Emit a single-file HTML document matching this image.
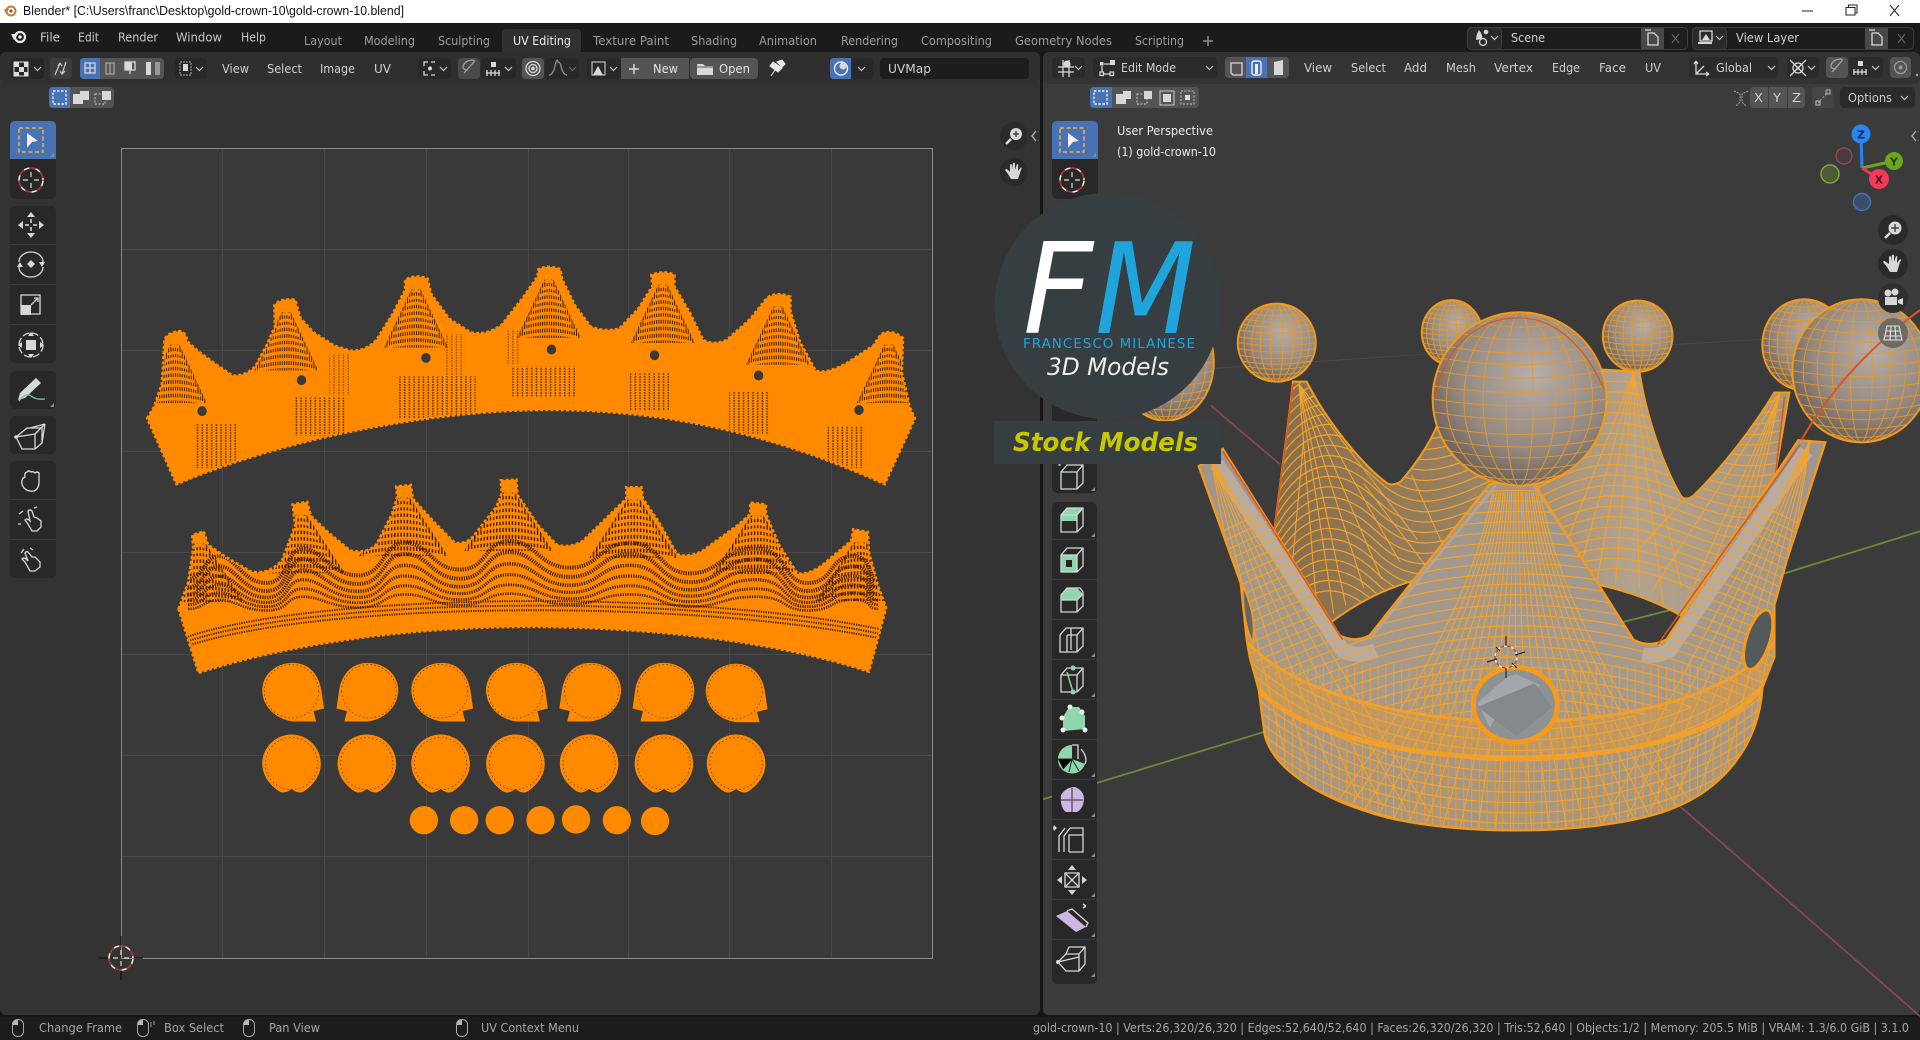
<!DOCTYPE html>
<html lang="en">
<head>
<meta charset="utf-8">
<title>Blender</title>
<style>
html,body{margin:0;padding:0;background:#333;width:1920px;height:1040px;overflow:hidden}
svg{display:block}
path,ellipse,line,circle,rect,polygon,polyline{vector-effect:non-scaling-stroke}
text{font-family:"DejaVu Sans","Liberation Sans",sans-serif;font-size:12.5px;fill:#c4c4c4}
.t{font-family:"Liberation Sans",sans-serif;font-size:12.5px;fill:#111}
.m{fill:#c8c8c8}
.tab{fill:#9c9c9c}
.hd{fill:#cfcfcf}
.st{fill:#a6a6a6;font-size:12px}
.ov{fill:#ececec}
.i{fill:none;stroke:#d8d8d8;stroke-width:1.3}
.f{fill:#d8d8d8;stroke:none}
.chev{fill:none;stroke:#c8c8c8;stroke-width:1.2}
.cell{fill:#282828}
.div{stroke:#3a3a3a;stroke-width:1}
</style>
</head>
<body>
<svg xmlns="http://www.w3.org/2000/svg" width="1920" height="1040" viewBox="0 0 1920 1040">
<defs>
<radialGradient id="bg" cx=".58" cy=".36" r=".72">
 <stop offset="0" stop-color="#b8aea8"/><stop offset=".6" stop-color="#94887f"/><stop offset="1" stop-color="#62564e"/>
</radialGradient>
<linearGradient id="fg" x1="0" y1="0" x2="0" y2="1">
 <stop offset="0" stop-color="#9f958c"/><stop offset=".6" stop-color="#a69a8d"/><stop offset="1" stop-color="#a8957c"/>
</linearGradient>
<linearGradient id="wg" x1="0" y1="0" x2="1" y2="0">
 <stop offset="0" stop-color="#8a6d48"/><stop offset=".35" stop-color="#97805f"/><stop offset=".7" stop-color="#b4a38e"/><stop offset="1" stop-color="#a8957c"/>
</linearGradient>
<pattern id="pd" width="9" height="7" patternUnits="userSpaceOnUse">
 <rect x="3" y="0" width="2.6" height="4.5" fill="#5a3300"/>
</pattern>
<pattern id="hh" width="6" height="8" patternUnits="userSpaceOnUse">
 <rect x="0" y="0" width="2.8" height="8" fill="#452200"/>
</pattern>
<pattern id="vl" width="13" height="20" patternUnits="userSpaceOnUse">
 <rect x="0" y="0" width="1.8" height="20" fill="#eba033" opacity=".85"/>
</pattern>
<clipPath id="cf"><path id="frontP" d="M365 660L385 640L405 620L600 1050Q625 1068 650 1050L850 702L870 695L925 700L1090 1060Q1115 1080 1145 1060L1365 600L1410 605L1345 880L1325 980L1325 1100L1305 1170C1300 1300 1240 1420 1120 1465C1000 1510 800 1510 680 1470C570 1430 490 1360 475 1280L465 1175L450 1100L445 1060L435 930Z"/></clipPath>
<clipPath id="cb"><path id="backP" d="M490 820C500 700 515 560 522 465L545 465C580 560 640 660 680 700Q690 706 702 695C730 650 755 600 770 540L790 420L1080 440L1100 440C1110 540 1140 660 1170 730Q1178 740 1190 728C1240 660 1290 570 1325 490L1350 490L1325 690L1170 1005C1120 965 1060 940 1020 930L720 925C660 950 620 985 585 1020Z"/></clipPath>
<clipPath id="cup"><path d="M340 560H1440V1060C1280 1320 520 1300 430 1060Z"/></clipPath>
<clipPath id="clo"><path d="M430 1060C520 1300 1280 1320 1440 1060V1560H340V1060Z"/></clipPath>
<clipPath id="cu1"><path id="u1" d="M52 440L65 410L80 350L85 235Q90 215 115 212Q128 218 128 238L150 265L185 300L215 328Q240 330 258 305L280 250L296 200L295 145Q305 125 335 130L345 178L370 215L410 250L440 263Q470 265 490 235L520 170L545 105L545 78Q565 62 588 75L595 115L630 180L670 215Q700 225 730 195L770 125L798 70L800 50Q820 38 842 50L845 75L870 145L900 200Q925 215 955 205L990 155L1018 95L1016 65Q1040 52 1060 65L1060 95L1090 165L1115 235Q1135 250 1160 235L1205 180L1237 125Q1255 108 1282 122L1282 160L1300 240L1330 315Q1350 325 1390 295L1440 250L1455 220Q1475 205 1497 230L1495 320L1510 410L1520 440L1462 612C1250 480 1040 418 820 418C600 418 320 490 108 612Z"/></clipPath>
<clipPath id="cu2"><path id="u2" d="M112 938L130 870L140 780L138 745L160 735L168 770L200 800L250 840Q285 850 310 810L335 720L330 665L358 658L365 695L400 740L440 785Q470 795 490 770L520 690L530 645L528 618L556 614L560 650L600 710L640 765Q665 770 680 740L720 670L730 635L728 602L758 600L760 640L800 720L835 770Q860 780 885 760L945 680L968 650L968 620L997 620L1000 650L1030 710L1065 795Q1090 805 1115 785L1180 720L1205 690L1205 660L1235 665L1235 690L1260 770L1295 845Q1320 850 1350 815L1398 760L1402 730L1430 737L1432 790L1450 880L1465 935L1432 1102C1250 1020 1000 985 780 985C550 985 320 1030 150 1105Z"/></clipPath>
<g id="pw">
 <path d="M-12 22L-85 175H85L12 22Z" fill="url(#hh)"/>
 <path fill="none" stroke="#ff8a00" stroke-width="3" d="M-10 30Q0 22 10 30M-18 48Q0 38 18 48M-27 66Q0 52 27 66M-35 84Q0 68 35 84M-44 102Q0 84 44 102M-52 120Q0 100 52 120M-60 138Q0 118 60 138M-68 156Q0 136 68 156M-76 174Q0 154 76 174"/>
</g>
<path id="wave" d="M130 40C160 40 160 -20 190 -20S235 50 280 50S315 -40 350 -40S402 30 455 30S500 -55 545 -55S597 15 650 15S697 -60 745 -60S802 10 860 10S917 -55 975 -55S1032 25 1090 25S1152 -40 1215 -40S1265 50 1315 50S1357 -20 1400 -20S1425 40 1450 40"/>
<path id="arch" d="M130 1080C400 960 1100 960 1450 1060"/>
<g id="ca"><path fill="#ff8a00" d="M0 -76C32 -76 50 -45 55 -5L60 43L40 50L45 77L0 77C-35 70 -58 35 -58 -5C-58 -45 -32 -76 0 -76Z"/><ellipse cx="-2" cy="-2" rx="52" ry="70" fill="none" stroke="#7a4200" stroke-width=".9" stroke-dasharray="1.5 2.5"/></g>
<g id="cb2"><path fill="#ff8a00" d="M0 -76C32 -76 56 -40 56 0C56 35 38 60 22 74Q14 78 6 72L0 66L-6 72Q-14 78 -22 74C-38 60 -56 35 -56 0C-56 -40 -32 -76 0 -76Z"/><ellipse cx="0" cy="0" rx="50" ry="68" fill="none" stroke="#7a4200" stroke-width=".9" stroke-dasharray="1.5 2.5"/></g>
<g id="ball">
 <circle r="100" fill="url(#bg)"/>
 <g fill="none" stroke="#e39a2e" stroke-width="1" opacity=".9">
  <ellipse rx="84" ry="100"/><ellipse rx="64" ry="100"/><ellipse rx="42" ry="100"/><ellipse rx="16" ry="100"/>
  <path d="M-99 15Q0 32 99 15M-95 32Q0 50 95 32M-89 47Q0 64 89 47M-80 60Q0 76 80 60M-66 75Q0 88 66 75M-47 88Q0 98 47 88M-100 0Q0 16 100 0M-99 -15Q0 0 99 -15M-95 -32Q0 -16 95 -32M-89 -47Q0 -32 89 -47M-80 -60Q0 -46 80 -60M-66 -75Q0 -62 66 -75M-47 -88Q0 -78 47 -88"/>
 </g>
 <circle r="100" fill="none" stroke="#f29a1c" stroke-width="2"/>
</g>
<path id="h" fill="none" stroke="#f0a32f" stroke-width="1.2" d="M430 467C650 777 1150 777 1350 467"/>
<path id="hc" fill="none" stroke="#f0a32f" stroke-width="1.2" d="M360 1180C620 1000 760 960 895 960C1030 960 1200 1000 1430 1180"/>
<path id="hb" fill="none" stroke="#f0a32f" stroke-width="1.2" d="M480 720C530 560 600 560 660 640S770 700 860 640S1000 520 1090 540S1240 640 1340 600"/>
<g id="cube"><path class="i" fill="none" d="M-11 -5L-5 -12L11 -12L11 6L5 12L-11 12ZM-11 -5L5 -5L11 -12M5 -5L5 12"/></g>
<g id="mouse"><rect x="-5.5" y="-8.5" width="11" height="17" rx="5" fill="none" stroke="#a8a8a8" stroke-width="1"/><path d="M-5 -3V-4Q-5 -8 0 -8V-3Z" fill="#b8b8b8"/></g>
<path id="corner" d="M0 0L-4 0L0 -4Z" fill="#8c8c8c"/>
<g id="sel"><rect x="-12" y="-12" width="24" height="24" fill="none" stroke="#e2b25a" stroke-width="1.6" stroke-dasharray="4 2.5"/><path d="M-4 -7L7 1L1 2L-4 8Z" fill="#f0f0f0"/></g>
<g id="cur"><circle r="12" fill="none" stroke="#f2f2f2" stroke-width="1.5" stroke-dasharray="7 5"/><circle r="12" fill="none" stroke="#b03a3a" stroke-width="1.5" stroke-dasharray="7 5" stroke-dashoffset="6"/><path d="M-8 0H-3M3 0H8M0 -8V-3M0 3V8" stroke="#ddd" stroke-width="1.2"/></g>
<g id="dd"><path class="chev" d="M0 0L3.5 3.5L7 0"/></g>
</defs>

<!-- window chrome -->
<rect width="1920" height="23" fill="#fff"/>
<g transform="translate(11,11)"><circle r="4.5" fill="none" stroke="#d9771e" stroke-width="2"/><circle r="1.6" fill="#2a6fb0"/><path d="M-7 -2L-2 -2L-5 3Z" fill="#d9771e"/></g>
<text class="t" x="23" y="15" textLength="381" lengthAdjust="spacingAndGlyphs">Blender* [C:\Users\franc\Desktop\gold-crown-10\gold-crown-10.blend]</text>
<path d="M1802 11H1813" stroke="#222" stroke-width="1"/>
<path d="M1846 7.5H1855V15H1846ZM1848.5 7.5V5H1857V13H1855" fill="none" stroke="#222" stroke-width="1"/>
<path d="M1890 5L1899 16M1899 5L1890 16" stroke="#222" stroke-width="1"/>

<!-- topbar -->
<rect y="23" width="1920" height="29" fill="#1b1b1b"/>
<g transform="translate(20,37)"><circle r="5" fill="none" stroke="#e8e8e8" stroke-width="2.2"/><circle r="1.8" fill="#e8e8e8"/><path d="M-9 -3H-2L-6 3Z" fill="#e8e8e8"/></g>
<text class="m" x="40" y="41.5" textLength="20" lengthAdjust="spacingAndGlyphs">File</text>
<text class="m" x="78" y="41.5" textLength="21" lengthAdjust="spacingAndGlyphs">Edit</text>
<text class="m" x="118" y="41.5" textLength="40" lengthAdjust="spacingAndGlyphs">Render</text>
<text class="m" x="176" y="41.5" textLength="46" lengthAdjust="spacingAndGlyphs">Window</text>
<text class="m" x="241" y="41.5" textLength="25" lengthAdjust="spacingAndGlyphs">Help</text>
<path d="M502 52V33Q502 29 506 29H577Q581 29 581 33V52Z" fill="#303030"/>
<text class="tab" x="304" y="45" textLength="38" lengthAdjust="spacingAndGlyphs">Layout</text>
<text class="tab" x="364" y="45" textLength="51" lengthAdjust="spacingAndGlyphs">Modeling</text>
<text class="tab" x="438" y="45" textLength="52" lengthAdjust="spacingAndGlyphs">Sculpting</text>
<text x="513" y="45" textLength="58" lengthAdjust="spacingAndGlyphs" style="fill:#ededed">UV Editing</text>
<text class="tab" x="593" y="45" textLength="76" lengthAdjust="spacingAndGlyphs">Texture Paint</text>
<text class="tab" x="691" y="45" textLength="46" lengthAdjust="spacingAndGlyphs">Shading</text>
<text class="tab" x="759" y="45" textLength="58" lengthAdjust="spacingAndGlyphs">Animation</text>
<text class="tab" x="841" y="45" textLength="57" lengthAdjust="spacingAndGlyphs">Rendering</text>
<text class="tab" x="921" y="45" textLength="71" lengthAdjust="spacingAndGlyphs">Compositing</text>
<text class="tab" x="1015" y="45" textLength="97" lengthAdjust="spacingAndGlyphs">Geometry Nodes</text>
<text class="tab" x="1135" y="45" textLength="49" lengthAdjust="spacingAndGlyphs">Scripting</text>
<path d="M1203 41H1213M1208 36V46" stroke="#8c8c8c" stroke-width="1.5"/>

<!-- scene / view layer -->
<rect x="1467.5" y="27.5" width="220" height="22" rx="4" fill="#1d1d1d" stroke="#3e3e3e"/>
<rect x="1467.5" y="27.5" width="34" height="22" rx="4" fill="#2a2a2a" stroke="#3e3e3e"/>
<g transform="translate(1481,38)"><circle cx="2" cy="4" r="3.5" class="i"/><path d="M-5 2Q-5 -3 -2 -8Q2 -3 1 1" class="f"/><circle cx="5" cy="-6" r="2.3" class="f"/></g>
<use href="#dd" x="1491" y="36"/>
<text class="hd" x="1511" y="42" textLength="34" lengthAdjust="spacingAndGlyphs">Scene</text>
<rect x="1641" y="28" width="23" height="21" fill="#484848"/>
<path d="M1648 33H1654L1658 37V45H1648ZM1645 30H1651" class="i" />
<path d="M1672 34L1679 43M1679 34L1672 43" stroke="#606060" stroke-width="1.2"/>
<rect x="1692.5" y="27.5" width="221" height="22" rx="4" fill="#1d1d1d" stroke="#3e3e3e"/>
<rect x="1692.5" y="27.5" width="34" height="22" rx="4" fill="#2a2a2a" stroke="#3e3e3e"/>
<g transform="translate(1706,38)"><rect x="-6" y="-7" width="12" height="10" class="i"/><rect x="-8" y="4" width="14" height="2" class="f"/><path d="M-4 2L0 -4L4 2Z" class="f"/></g>
<use href="#dd" x="1716" y="36"/>
<text class="hd" x="1736" y="42" textLength="63" lengthAdjust="spacingAndGlyphs">View Layer</text>
<rect x="1865" y="28" width="23" height="21" fill="#484848"/>
<path d="M1872 33H1878L1882 37V45H1872ZM1869 30H1875" class="i"/>
<path d="M1898 34L1905 43M1905 34L1898 43" stroke="#606060" stroke-width="1.2"/>

<!-- areas -->
<rect y="52" width="1920" height="966" fill="#161616"/>
<rect x="0" y="52" width="1040" height="963" rx="6" fill="#333"/>
<rect x="0" y="52" width="1040" height="32" rx="6" fill="#2f2f2f"/>
<rect x="1043" y="52" width="877" height="963" rx="6" fill="#3b3b3b"/>
<rect x="1043" y="52" width="877" height="32" rx="6" fill="#333"/>
<rect y="1017" width="1920" height="23" fill="#1c1c1c"/>

<!-- UV image area -->
<rect x="121" y="148" width="811" height="810" fill="#393939"/>
<g stroke="#484848" stroke-width="1">
 <path d="M222.5 148V958M324.5 148V958M426.5 148V958M528.5 148V958M628.5 148V958M729.5 148V958M831.5 148V958"/>
 <path d="M121 249.5H932M121 350.5H932M121 451.5H932M121 552.5H932M121 654.5H932M121 755.5H932M121 856.5H932"/>
</g>
<rect x="121.5" y="148.5" width="811" height="810" fill="none" stroke="#8d8d8d" stroke-width="1"/>

<!-- UV islands -->
<g transform="translate(120,250) scale(.523,.3827)">
 <use href="#u1" fill="#ff8a00"/>
 <use href="#u2" fill="#ff8a00"/>
 <g clip-path="url(#cu1)">
  <use href="#pw" transform="translate(105,225) scale(.72,1)"/><use href="#pw" transform="translate(318,140) scale(.72,1)"/><use href="#pw" transform="translate(566,80) scale(.72,1)"/><use href="#pw" transform="translate(820,55) scale(.72,1)"/><use href="#pw" transform="translate(1038,68) scale(.72,1)"/><use href="#pw" transform="translate(1258,125) scale(.72,1)"/><use href="#pw" transform="translate(1470,225) scale(.72,1)"/>
  <g fill="url(#pd)">
   <rect x="145" y="455" width="80" height="115"/><rect x="330" y="385" width="100" height="100"/><rect x="530" y="330" width="150" height="110"/><rect x="750" y="305" width="120" height="80"/><rect x="975" y="320" width="75" height="100"/><rect x="1165" y="370" width="80" height="110"/><rect x="1350" y="460" width="75" height="110"/>
   <rect x="400" y="270" width="40" height="110" opacity=".6"/><rect x="620" y="220" width="40" height="110" opacity=".6"/><rect x="735" y="210" width="30" height="90" opacity=".6"/>
  </g>
  <g fill="#393939">
   <ellipse cx="157" cy="421" rx="9" ry="13"/><ellipse cx="347" cy="340" rx="9" ry="13"/><ellipse cx="585" cy="282" rx="9" ry="13"/><ellipse cx="825" cy="260" rx="9" ry="13"/><ellipse cx="1022" cy="275" rx="9" ry="13"/><ellipse cx="1221" cy="328" rx="9" ry="13"/><ellipse cx="1413" cy="418" rx="9" ry="13"/>
  </g>
 </g>
 <g clip-path="url(#cu2)">
  <use href="#pw" transform="translate(152,745)"/><use href="#pw" transform="translate(345,670)"/><use href="#pw" transform="translate(542,625)"/><use href="#pw" transform="translate(743,612)"/><use href="#pw" transform="translate(982,630)"/><use href="#pw" transform="translate(1218,672)"/><use href="#pw" transform="translate(1415,742)"/>
  <g fill="none" stroke="#4a2500" stroke-dasharray="1.3 1.1">
   <use href="#wave" transform="translate(0,820)" stroke-width="4"/>
   <use href="#wave" transform="translate(0,845) scale(1,.92)" stroke-width="4"/>
   <use href="#wave" transform="translate(0,868) scale(1,.8)" stroke-width="3.6"/>
   <use href="#wave" transform="translate(0,888) scale(1,.66)" stroke-width="3.2"/>
   <use href="#wave" transform="translate(0,906) scale(1,.52)" stroke-width="3"/>
   <use href="#wave" transform="translate(0,922) scale(1,.4)" stroke-width="2.6"/>
   <use href="#arch" y="-46" stroke-width="2"/><use href="#arch" y="-58" stroke-width="2"/><use href="#arch" y="-70" stroke-width="2"/>
  </g>
 </g>
 <use href="#u1" fill="none" stroke="#ff8a00" stroke-width="2.6" stroke-dasharray="3 2.2"/>
 <use href="#u2" fill="none" stroke="#ff8a00" stroke-width="2.6" stroke-dasharray="3 2.2"/>
 <use href="#ca" transform="translate(330,1155)"/>
 <use href="#ca" transform="translate(474,1155) scale(-1,1)"/>
 <use href="#ca" transform="translate(615,1155)"/>
 <use href="#ca" transform="translate(758,1155)"/>
 <use href="#ca" transform="translate(900,1155) scale(-1,1)"/>
 <use href="#ca" transform="translate(1040,1155) scale(-1,1)"/>
 <use href="#ca" transform="translate(1178,1157)"/>
 <use href="#cb2" transform="translate(328,1342)"/><use href="#cb2" transform="translate(472,1342)"/><use href="#cb2" transform="translate(613,1342)"/><use href="#cb2" transform="translate(756,1342)"/><use href="#cb2" transform="translate(897,1342)"/><use href="#cb2" transform="translate(1040,1342)"/><use href="#cb2" transform="translate(1178,1342)"/>
 <g fill="#ff8a00">
  <ellipse cx="581" cy="1490" rx="27" ry="37"/><ellipse cx="658" cy="1490" rx="27" ry="37"/><ellipse cx="726" cy="1490" rx="27" ry="37"/><ellipse cx="804" cy="1490" rx="27" ry="37"/><ellipse cx="872" cy="1488" rx="27" ry="37"/><ellipse cx="950" cy="1490" rx="27" ry="37"/><ellipse cx="1023" cy="1492" rx="27" ry="37"/>
 </g>
</g>

<!-- 2D cursor -->
<g transform="translate(121,958)"><use href="#cur"/><path d="M-22 0H-13M13 0H22M0 -22V-13M0 13V22" stroke="#111" stroke-width="1.2"/></g>

<!-- left header -->
<g>
<rect x="11" y="58" width="33" height="21" rx="4" fill="#262626"/>
<g transform="translate(21,69)"><rect x="-7" y="-7" width="14" height="14" fill="none" stroke="#ddd"/><path d="M-7 -7H-2V-2H-7ZM3 -7H7V-2H3ZM-2 -2H3V3H-2ZM-7 3H-2V7H-7ZM3 3H7V7H3Z" fill="#ddd"/></g><use href="#dd" x="34" y="67"/>
<rect x="50" y="58" width="22" height="21" rx="4" fill="#3d3d3d"/>
<path d="M55 75L60 63L58 66M60 63L62 66M66 62L62 74L60 71M62 74L65 71" fill="none" stroke="#ccc" stroke-width="1.2"/>
<rect x="80" y="58" width="84" height="21" rx="4" fill="#545454"/>
<path d="M84 58H100V79H84Q80 79 80 75V62Q80 58 84 58Z" fill="#4772b3"/>
<path d="M85 63H95V73H85ZM90 63V73M85 68H95" class="i" stroke="#eee"/>
<path d="M106 63H114V74H106ZM110 63V74" class="i" opacity=".6"/>
<path d="M125 62H135V70H125ZM130 70V74" class="i" /><rect x="125" y="62" width="7" height="8" class="f"/>
<rect x="146" y="62" width="5" height="13" class="f"/><rect x="155" y="62" width="5" height="13" class="f" opacity=".5"/>
<rect x="175" y="58" width="32" height="21" rx="4" fill="#282828"/>
<rect x="180" y="62" width="11" height="13" fill="none" stroke="#aaa" stroke-dasharray="2 1"/><rect x="183" y="64" width="5" height="7" class="f"/><use href="#dd" x="196" y="67"/>
<text class="hd" x="222" y="73" textLength="27" lengthAdjust="spacingAndGlyphs">View</text>
<text class="hd" x="267" y="73" textLength="35" lengthAdjust="spacingAndGlyphs">Select</text>
<text class="hd" x="320" y="73" textLength="35" lengthAdjust="spacingAndGlyphs">Image</text>
<text class="hd" x="374" y="73" textLength="17" lengthAdjust="spacingAndGlyphs">UV</text>
<rect x="418" y="58" width="33" height="21" rx="4" fill="#282828"/>
<path d="M424 66V62H428M435 62H431M424 71V75H428M435 75H431" class="i"/><circle cx="430" cy="68.500" r="2" class="f"/><use href="#dd" x="440" y="67"/>
<rect x="458" y="58" width="22" height="21" rx="4" fill="#4a4a4a"/>
<path d="M464 73L473 63Q476 60 472 60Q464 61 463 67Q463 70 468 70" class="i" opacity=".6"/>
<rect x="481" y="58" width="35" height="21" rx="4" fill="#282828"/>
<path d="M486 73H500M487 70V76M491 70V76M495 70V76M499 70V76" class="i"/><rect x="491" y="62" width="5" height="5" class="f"/><use href="#dd" x="505" y="67"/>
<rect x="522" y="58" width="22" height="21" rx="4" fill="#545454"/>
<circle cx="533" cy="68.500" r="7" class="i"/><circle cx="533" cy="68.500" r="4" class="i"/><circle cx="533" cy="68.500" r="1.800" class="f"/>
<rect x="545" y="58" width="34" height="21" rx="4" fill="#282828"/>
<path d="M549 75Q553 75 555 66T558 62Q560 62 561 66Q563 75 567 75" class="i" opacity=".6"/><use href="#dd" x="569" y="67" opacity=".4"/>
<rect x="587" y="58" width="34" height="21" rx="4" fill="#282828"/>
<rect x="592" y="62" width="13" height="13" fill="none" stroke="#ddd"/><path d="M593 75L598 66L603 75Z" class="f"/><use href="#dd" x="610" y="67"/>
<rect x="621" y="58" width="68" height="21" fill="#545454"/>
<path d="M629 69H639M634 64V74" stroke="#ddd" stroke-width="1.400"/>
<text x="653" y="73" textLength="25" lengthAdjust="spacingAndGlyphs" style="fill:#e4e4e4">New</text>
<rect x="690" y="58" width="68" height="21" rx="4" fill="#545454"/>
<path d="M697 64H703L705 66H713V75H697Z" class="f"/><path d="M697 67H713" stroke="#545454"/>
<text x="719" y="73" textLength="31" lengthAdjust="spacingAndGlyphs" style="fill:#e4e4e4">Open</text>
<path d="M771 76L775 70M773 62L782 68L778 72L770 66ZM777 62L782 60L785 64L782 67Z" fill="#e8e8e8" stroke="#e8e8e8"/>
<path d="M834 58H851V79H834Q830 79 830 75V62Q830 58 834 58Z" fill="#4772b3"/>
<circle cx="841" cy="68.500" r="6.500" fill="none" stroke="#eee" stroke-width="1.400"/><circle cx="843" cy="66" r="3.500" class="f"/>
<rect x="852" y="58" width="21" height="21" rx="4" fill="#282828"/><use href="#dd" x="858" y="67"/>
<rect x="880" y="58" width="149" height="21" rx="4" fill="#1d1d1d"/>
<text class="hd" x="888" y="73" textLength="43" lengthAdjust="spacingAndGlyphs">UVMap</text>
<!-- second row -->
<rect x="49" y="87" width="65" height="21" rx="4" fill="#545454"/>
<path d="M53 87H70V108H53Q49 108 49 104V91Q49 87 53 87Z" fill="#4772b3"/>
<rect x="53" y="91" width="13" height="13" fill="none" stroke="#eee" stroke-width="1.400" stroke-dasharray="2.500 1.500"/>
<rect x="73" y="94" width="10" height="10" class="f"/><rect x="80" y="91" width="9" height="9" class="f"/>
<rect x="95" y="94" width="10" height="10" fill="none" stroke="#ccc" stroke-dasharray="2 1.500"/><rect x="102" y="91" width="9" height="9" class="f"/>
</g>

<!-- left toolbar -->
<g>
<rect x="10" y="121" width="46" height="78" rx="5" class="cell"/>
<path d="M15 121H51Q56 121 56 126V159H10V126Q10 121 15 121Z" fill="#4772b3"/>
<use href="#sel" x="31" y="140"/><use href="#corner" x="54" y="157"/>
<use href="#cur" x="31" y="180"/>
<rect x="10" y="206" width="46" height="157" rx="5" class="cell"/>
<path class="div" d="M10 244.500H56M10 284.500H56M10 324.500H56"/>
<g transform="translate(31,225)" class="f"><path d="M0 -13L4 -8H-4ZM0 13L4 8H-4ZM-13 0L-8 -4V4ZM13 0L8 -4V4Z"/><path d="M0 -6V-2M0 2V6M-6 0H-2M2 0H6" stroke="#ddd" stroke-width="1.500"/></g>
<g transform="translate(31,264)"><path class="i" d="M-12 -2A12 10 0 0 1 12 -2M12 3A12 10 0 0 1 -12 3"/><path class="f" d="M0 -4L4 0L0 4L-4 0ZM-14 3L-8 3L-11 -2ZM14 -2L8 -2L11 3Z"/></g>
<g transform="translate(31,307)"><rect x="-10" y="-12" width="19" height="19" class="i"/><rect x="-10" y="-2" width="10" height="10" class="f"/><path d="M0 -2L6 -8M3 -9H7V-5" class="i"/></g>
<g transform="translate(31,345)"><circle r="12" class="i" stroke-dasharray="7 2.500"/><rect x="-5" y="-5" width="10" height="10" class="f"/><path class="f" d="M0 -13L3 -9H-3ZM0 13L3 9H-3ZM-13 0L-9 -3V3ZM13 0L9 -3V3Z"/></g>
<rect x="10" y="371" width="46" height="38" rx="5" class="cell"/>
<g transform="translate(31,390)"><path class="f" d="M-11 3L5 -12L10 -7L-6 8L-13 10Z"/><path d="M-12 11Q-5 2 0 6T14 9" fill="none" stroke="#7fc7a2" stroke-width="1.300"/></g>
<use href="#corner" x="54" y="407"/>
<rect x="10" y="416" width="46" height="38" rx="5" class="cell"/>
<g transform="translate(31,434)"><path class="i" d="M-15 3L-4 -6H11V9L4 15H-9ZM-4 -6L-1 -6L14 -10M11 9L14 -10M-15 3L4 0V15M4 0L14 -10"/><circle cx="-15" cy="3" r="1.800" class="f"/></g>
<rect x="10" y="461" width="46" height="117" rx="5" class="cell"/>
<path class="div" d="M10 499.500H56M10 539.500H56"/>
<g transform="translate(31,480)"><path class="i" d="M-8 -2Q-11 3 -7 8Q-3 12 3 11Q8 9 8 2V-7Q6 -9 4 -7Q2 -9 0 -8Q-2 -10 -4 -8Q-7 -7 -6 -3Z"/></g>
<g transform="translate(31,519)"><path class="i" d="M-3 5L-6 1Q-5 -1 -2 1L-1 2L-3 -8Q-1 -10 1 -8L3 -2L6 -1L10 2V8L6 12H1Z"/><path class="i" d="M-8 -8L-12 -5M3 -11L6 -12M-13 5H-10"/></g>
<g transform="translate(31,559)"><path class="i" d="M-6 3L-9 0Q-7 -2 -5 0L-3 2L-6 -6Q-5 -8 -3 -7L1 -2L4 -2L9 3V8L4 12H-1Z"/><path class="i" d="M-10 -6L-7 -10M-1 -11L2 -9"/></g>
</g>

<!-- nav left -->
<circle cx="1014" cy="136" r="14" fill="#2a2a2a"/>
<g transform="translate(1014,136)"><circle cx="2" cy="-2" r="6" class="f"/><path d="M-3 3L-8 8" stroke="#ddd" stroke-width="2.500"/><path d="M2 -5V1M-1 -2H5" stroke="#2a2a2a" stroke-width="1.200"/></g>
<circle cx="1014" cy="172" r="14" fill="#2a2a2a"/>
<g transform="translate(1014,172)"><path class="f" d="M-6 2L-9 -2Q-8 -4 -6 -2L-4 0V-7Q-3 -9 -2 -7V-2L-1 -9Q1 -10 1 -8V-2L3 -8Q5 -8 4 -5V-1L7 -5Q8 -4 7 -2L4 7H-3Z"/></g>
<path d="M1036 131L1032 136L1036 141" fill="none" stroke="#aaa" stroke-width="1.400"/>

<!-- 3D viewport content -->
<g transform="translate(980,180) scale(.5995,.4337)">
 <g fill="none" stroke-width="1.800">
  <path d="M105 1428L480 1270M1070 1020L1170 985M1335 910L1568 810" stroke="#6c8a3a"/>
  <path d="M385 520L500 655M1160 1435L1568 1928" stroke="#84485a"/>
 </g>
 <path d="M385 435L760 400M1150 380L1400 360" stroke="#4a4a4a" stroke-width="1" fill="none"/>
 <!-- back balls -->
 <use href="#ball" transform="translate(787,352) scale(.5,.75)"/>
 <use href="#ball" transform="translate(1097,360) scale(.58,.82)"/>
 <use href="#ball" transform="translate(495,375) scale(.65,.9)"/>
 <use href="#ball" transform="translate(1375,380) scale(.7,1.05)"/>
 <use href="#ball" transform="translate(310,420) scale(.8,1.35)"/>
 <!-- back wall -->
 <use href="#backP" fill="url(#wg)"/>
 <g clip-path="url(#cb)">
  <use href="#hb" y="-144"/><use href="#hb" y="-120"/><use href="#hb" y="-96"/><use href="#hb" y="-72"/><use href="#hb" y="-48"/><use href="#hb" y="-24"/><use href="#hb" y="0"/><use href="#hb" y="24"/><use href="#hb" y="48"/><use href="#hb" y="72"/><use href="#hb" y="96"/><use href="#hb" y="120"/><use href="#hb" y="144"/><use href="#hb" y="168"/><use href="#hb" y="192"/><use href="#hb" y="216"/><use href="#hb" y="240"/><use href="#hb" y="264"/><use href="#hb" y="288"/><use href="#hb" y="312"/><use href="#hb" y="336"/><use href="#hb" y="360"/>
  <path fill="none" stroke="#f0a32f" stroke-width="1.100" d="M532 470L590 1000M532 470L610 980M532 470L640 940M532 470L670 920M532 470L700 880M532 470L730 830M532 470L560 960M540 600L520 900M640 700L760 920M720 680L800 930M1090 445L960 900M1090 445L1000 900M1090 445L1030 920M1090 445L1060 930M1090 445L1100 940M1090 445L1140 980M1090 445L1170 940M1335 490L1170 1000M1335 490L1200 970M1335 490L1230 930M1335 490L1260 870M1335 490L1290 780M1335 490L1120 950M1335 490L1100 850"/>
 </g>
 <use href="#backP" fill="none" stroke="#f09c1f" stroke-width="2"/>
 <path d="M490 820C500 700 515 560 522 470M1326 690L1342 500" fill="none" stroke="#d9561e" stroke-width="1.500"/>
 <!-- front -->
 <use href="#frontP" fill="url(#fg)"/>
 <g clip-path="url(#cf)">
  <path d="M395 655L605 1085Q630 1102 660 1085" fill="none" stroke="#b9ac9f" stroke-width="15"/>
  <path d="M1105 1095Q1130 1100 1150 1085L1378 625" fill="none" stroke="#b9ac9f" stroke-width="15"/>
  <rect x="440" y="1120" width="900" height="400" fill="url(#vl)"/>
  <path d="M445 1070C600 1300 1180 1320 1325 1070L1305 1170C1200 1370 580 1380 465 1175Z" fill="#d89a44" opacity=".5"/>
  <g clip-path="url(#cup)">
   <use href="#hc" y="-340"/><use href="#hc" y="-316"/><use href="#hc" y="-292"/><use href="#hc" y="-268"/><use href="#hc" y="-244"/><use href="#hc" y="-220"/><use href="#hc" y="-196"/><use href="#hc" y="-172"/><use href="#hc" y="-148"/><use href="#hc" y="-124"/><use href="#hc" y="-100"/><use href="#hc" y="-76"/><use href="#hc" y="-52"/><use href="#hc" y="-28"/><use href="#hc" y="-4"/><use href="#hc" y="20"/><use href="#hc" y="44"/><use href="#hc" y="68"/><use href="#hc" y="92"/><use href="#hc" y="116"/><use href="#hc" y="140"/><use href="#hc" y="164"/><use href="#hc" y="188"/><use href="#hc" y="212"/><use href="#hc" y="236"/><use href="#hc" y="260"/><use href="#hc" y="284"/>
  </g>
  <g clip-path="url(#clo)">
   <use href="#h" y="520"/><use href="#h" y="544"/><use href="#h" y="568"/><use href="#h" y="592"/><use href="#h" y="616"/><use href="#h" y="640"/><use href="#h" y="664"/><use href="#h" y="688"/><use href="#h" y="712"/><use href="#h" y="736"/><use href="#h" y="760"/><use href="#h" y="784"/><use href="#h" y="808"/>
  </g>
  <path fill="none" stroke="#f0a32f" stroke-width="1.100" d="M855 720Q811 1050 560 1500M858 720Q819 1050 590 1500M862 720Q826 1050 620 1500M866 720Q834 1050 650 1500M869 720Q841 1050 680 1500M873 720Q849 1050 710 1500M876 720Q856 1050 740 1500M880 720Q864 1050 770 1500M884 720Q871 1050 800 1500M887 720Q879 1050 830 1500M891 720Q886 1050 860 1500M894 720Q894 1050 890 1500M898 720Q901 1050 920 1500M902 720Q909 1050 950 1500M905 720Q916 1050 980 1500M909 720Q924 1050 1010 1500M912 720Q931 1050 1040 1500M916 720Q939 1050 1070 1500M920 720Q946 1050 1100 1500M923 720Q954 1050 1130 1500M927 720Q961 1050 1160 1500M930 720Q969 1050 1190 1500M934 720Q976 1050 1220 1500"/>
  <path fill="none" stroke="#f0a32f" stroke-width="1.100" d="M385 640L470 1300M385 640L510 1330M385 640L550 1360M385 640L590 1380M385 640L630 1420M385 640L670 1440M385 640L710 1450M385 640L750 1460M1385 600L1310 1250M1385 600L1280 1330M1385 600L1240 1370M1385 600L1200 1410M1385 600L1160 1430M1385 600L1120 1450M1385 600L1080 1470M1385 600L1040 1480"/>
  <path d="M650 1058L860 705M925 705L1095 1065" fill="none" stroke="#b8a48e" stroke-width="3"/>
  <path d="M445 1065C600 1300 1180 1320 1325 1065" fill="none" stroke="#f2a02a" stroke-width="3"/>
  <path d="M465 1175C600 1380 1180 1390 1305 1170" fill="none" stroke="#f2a02a" stroke-width="5"/>
 </g>
 <use href="#frontP" fill="none" stroke="#f29a1c" stroke-width="2.400"/>
 <path d="M405 625L605 1060M1130 1072L1368 610" fill="none" stroke="#d9561e" stroke-width="1.500"/>
 <!-- front balls -->
 <use href="#ball" transform="translate(900,505) scale(1.45,2)"/>
 <path d="M760 505C770 390 830 315 900 318C960 318 1010 385 1040 480" fill="none" stroke="#d9561e" stroke-width="1.200"/>
 <use href="#ball" transform="translate(1470,440) scale(1.15,1.65)"/>
 <path d="M1568 300Q1440 430 1370 600" fill="none" stroke="#d9561e" stroke-width="2"/>
 <!-- gems -->
 <ellipse cx="893" cy="1210" rx="70" ry="86" fill="#8e9294" stroke="#f59a1a" stroke-width="5"/>
 <path d="M830 1205L880 1145L895 1140L935 1165L880 1200L850 1262Z" fill="#a4a8aa"/>
 <path d="M830 1215L925 1160L955 1215L895 1282Z" fill="#85898b"/>
 <ellipse cx="1298" cy="1060" rx="20" ry="70" fill="#54595c" stroke="#f59a1a" stroke-width="3" transform="rotate(12 1298 1060)"/>
 <path d="M438 935Q462 1000 455 1068Q438 1020 438 935Z" fill="#5f6568" stroke="#f59a1a" stroke-width="2"/>
</g>
<!-- 3D cursor -->
<g transform="translate(1506,657)">
 <circle r="11" fill="none" stroke="#f2f2f2" stroke-width="1.400" stroke-dasharray="4 3"/>
 <circle r="11" fill="none" stroke="#c8423a" stroke-width="1.400" stroke-dasharray="4 3" stroke-dashoffset="3.500"/>
 <circle r="2" fill="#f59a1a"/>
 <path d="M-19 5L-9 2M9 -2L19 -5M0 -21V-11M0 11V21M-10 -10L-6 -6M6 6L11 11" stroke="#111" stroke-width="1"/>
</g>

<!-- right header -->
<g>
<rect x="1052" y="57" width="33" height="21" rx="4" fill="#2b2b2b"/>
<g transform="translate(1066,67)"><path class="i" d="M-8 0H8M-8 5H8M-3 -7V10M3 -7V10"/><circle cx="1" cy="-3" r="3.500" class="f"/></g><use href="#dd" x="1075" y="66"/>
<rect x="1093" y="57" width="124" height="21" rx="4" fill="#2b2b2b"/>
<g transform="translate(1107,68)"><rect x="-7" y="-6" width="3.500" height="3.500" class="f"/><rect x="3" y="-8" width="5" height="5" class="f"/><rect x="-7" y="4" width="3.500" height="3.500" class="i"/><rect x="3" y="4" width="3.500" height="3.500" class="i"/><path d="M-3 -4H3M-5 -2V4M-3 6H3" class="i" stroke-width="1"/></g>
<text class="hd" x="1121" y="72" textLength="55" lengthAdjust="spacingAndGlyphs">Edit Mode</text>
<use href="#dd" x="1206" y="66"/>
<rect x="1225" y="57" width="64" height="21" rx="4" fill="#545454"/>
<rect x="1246" y="57" width="21" height="21" fill="#4772b3"/>
<path d="M1231 63H1242V75H1233L1231 73ZM1233 60" class="i"/>
<rect x="1252" y="61" width="9" height="14" rx="2" fill="none" stroke="#eee" stroke-width="1.400"/><rect x="1255" y="64" width="3" height="10" fill="#eee"/>
<path d="M1274 62L1283 60V75H1274Z" class="f"/>
<text class="hd" x="1304" y="72" textLength="28" lengthAdjust="spacingAndGlyphs">View</text>
<text class="hd" x="1351" y="72" textLength="35" lengthAdjust="spacingAndGlyphs">Select</text>
<text class="hd" x="1404" y="72" textLength="23" lengthAdjust="spacingAndGlyphs">Add</text>
<text class="hd" x="1446" y="72" textLength="30" lengthAdjust="spacingAndGlyphs">Mesh</text>
<text class="hd" x="1494" y="72" textLength="39" lengthAdjust="spacingAndGlyphs">Vertex</text>
<text class="hd" x="1552" y="72" textLength="28" lengthAdjust="spacingAndGlyphs">Edge</text>
<text class="hd" x="1599" y="72" textLength="27" lengthAdjust="spacingAndGlyphs">Face</text>
<text class="hd" x="1645" y="72" textLength="16" lengthAdjust="spacingAndGlyphs">UV</text>
<rect x="1689" y="57" width="89" height="21" rx="4" fill="#2b2b2b"/>
<path d="M1696 61V74H1709M1696 74L1704 66M1696 61L1694 64M1696 61L1698 64M1709 74L1706 72M1709 74L1706 76" class="i"/>
<text class="hd" x="1716" y="72" textLength="36" lengthAdjust="spacingAndGlyphs">Global</text>
<use href="#dd" x="1768" y="66"/>
<rect x="1787" y="57" width="32" height="21" rx="4" fill="#2b2b2b"/>
<g transform="translate(1798,68)"><circle r="5" class="i"/><circle r="1.500" class="f"/><path d="M-8 -8L8 8M8 -8L-8 8" class="i" stroke-width="1"/></g><use href="#dd" x="1808" y="66"/>
<rect x="1826" y="57" width="22" height="21" rx="4" fill="#545454"/>
<path d="M1832 72L1841 62Q1844 59 1840 59Q1832 60 1831 66Q1831 69 1836 69" class="i" opacity=".6"/>
<rect x="1849" y="57" width="34" height="21" rx="4" fill="#2b2b2b"/>
<path d="M1853 72H1867M1854 69V75M1858 69V75M1862 69V75M1866 69V75" class="i"/><rect x="1858" y="61" width="5" height="5" class="f"/><use href="#dd" x="1872" y="66"/>
<rect x="1890" y="57" width="21" height="21" rx="4" fill="#545454"/>
<circle cx="1900.500" cy="67.500" r="6" fill="none" stroke="#999" stroke-width="1.300"/><circle cx="1900.500" cy="67.500" r="2" fill="#999"/>
<circle cx="1917" cy="75" r="1.200" fill="#aaa"/>
<!-- second row -->
<rect x="1090" y="87" width="109" height="21" rx="4" fill="#545454"/>
<path d="M1094 87H1112V108H1094Q1090 108 1090 104V91Q1090 87 1094 87Z" fill="#4772b3"/>
<rect x="1094" y="91" width="13" height="13" fill="none" stroke="#eee" stroke-width="1.400" stroke-dasharray="2.500 1.500"/>
<rect x="1116" y="94" width="10" height="10" class="f"/><rect x="1123" y="91" width="8" height="8" class="f"/>
<rect x="1137" y="94" width="10" height="10" fill="none" stroke="#ccc" stroke-dasharray="2 1.500"/><rect x="1144" y="91" width="8" height="8" class="f"/>
<rect x="1160" y="91" width="14" height="14" fill="none" stroke="#ccc"/><rect x="1163" y="94" width="8" height="8" class="f"/>
<rect x="1181" y="91" width="13" height="13" fill="none" stroke="#bbb" stroke-dasharray="2 1.500"/><rect x="1185" y="95" width="5" height="5" class="f"/>
<path d="M1734 91L1740 94V102L1736 106M1748 91L1742 94V102L1746 106" fill="none" stroke="#aaa" stroke-dasharray="2 1"/>
<rect x="1750" y="87" width="55" height="21" rx="4" fill="#545454"/>
<path d="M1768.500 87V108M1787.500 87V108" stroke="#3d3d3d"/>
<text class="hd" x="1754" y="102" textLength="9" lengthAdjust="spacingAndGlyphs">X</text>
<text class="hd" x="1773" y="102" textLength="8" lengthAdjust="spacingAndGlyphs">Y</text>
<text class="hd" x="1792" y="102" textLength="9" lengthAdjust="spacingAndGlyphs">Z</text>
<rect x="1812" y="87" width="21" height="21" rx="4" fill="#454545"/>
<path d="M1818 103L1828 92" stroke="#9a9a9a" stroke-dasharray="2 1.500"/><rect x="1816" y="101" width="4" height="4" fill="none" stroke="#bbb"/><rect x="1826" y="90" width="4" height="4" fill="none" stroke="#bbb"/>
<rect x="1840" y="87" width="75" height="21" rx="4" fill="#2b2b2b"/>
<text class="hd" x="1848" y="102" textLength="44" lengthAdjust="spacingAndGlyphs">Options</text>
<use href="#dd" x="1901" y="96"/>
</g>

<text class="ov" x="1117" y="135" textLength="96" lengthAdjust="spacingAndGlyphs">User Perspective</text>
<text class="ov" x="1117" y="156" textLength="99" lengthAdjust="spacingAndGlyphs">(1) gold-crown-10</text>

<!-- right toolbar -->
<g>
<rect x="1052" y="121" width="46" height="78" rx="5" class="cell"/>
<path d="M1057 121H1093Q1098 121 1098 126V159H1052V126Q1052 121 1057 121Z" fill="#4772b3"/>
<use href="#sel" x="1072" y="140"/><use href="#corner" x="1096" y="157"/>
<use href="#cur" x="1072" y="180"/>
<rect x="1052" y="206" width="45" height="287" rx="5" class="cell"/>
<rect x="1052" y="502" width="45" height="482" rx="5" class="cell"/>
<path class="div" d="M1052 539.500H1097M1052 579.500H1097M1052 619.500H1097M1052 659.500H1097M1052 699.500H1097M1052 739.500H1097M1052 779.500H1097M1052 819.500H1097M1052 859.500H1097M1052 899.500H1097M1052 939.500H1097"/>
<g transform="translate(1072,477)"><use href="#cube"/><path d="M-17 -17H-8M-12.500 -17V-11" stroke="#8fd6ae" stroke-width="2"/></g>
<g transform="translate(1072,520)"><path d="M-11 -5L-5 -12L11 -12L5 -5Z" fill="#8fd6ae"/><rect x="-11" y="-5" width="16" height="6" fill="#8fd6ae"/><use href="#cube"/></g>
<g transform="translate(1072,560)"><path d="M-11 -5H5V12H-11Z" fill="#8fd6ae"/><rect x="-6" y="0" width="6" height="7" fill="#222"/><use href="#cube"/></g>
<g transform="translate(1072,600)"><path d="M-11 -5L-5 -12L5 -12L11 -6L5 0H-11Z" fill="#8fd6ae"/><path class="i" d="M-11 -5L-5 -12H8L11 -8V6L5 12H-11ZM-11 0H5V12M5 0L11 -6"/></g>
<g transform="translate(1072,640)"><path class="i" d="M-12 -5L-6 -12H11V6L5 12H-12ZM-12 -5V12M-5 -5V12M-5 -5H5V12M5 -5L11 -12M-1 -12V10"/></g>
<g transform="translate(1072,680)"><use href="#cube"/><path d="M-5 -8L1 12" stroke="#8fd6ae" stroke-width="1.400"/><circle cx="1" cy="-12" r="2.500" fill="#8fd6ae"/><circle cx="1" cy="12" r="2.500" fill="#8fd6ae"/></g>
<g transform="translate(1072,719)"><path d="M-9 -2L-3 -12H7L13 -3V10L-9 12Z" fill="#8fd6ae"/><g fill="#eee"><circle cx="-2" cy="-12" r="2.500"/><circle cx="10" cy="-7" r="2.500"/><circle cx="-10" cy="-1" r="2.500"/><circle cx="-9" cy="11" r="2.500"/><circle cx="13" cy="11" r="2.500"/></g></g>
<g transform="translate(1072,759)"><path d="M0 0L0 -14A14 14 0 0 0 -14 0A14 14 0 0 0 8 12A14 14 0 0 0 13 5Z" fill="#8fd6ae"/><path d="M-14 0H0L-9 10M0 0L-3 13M0 0L7 12" stroke="#222" stroke-width="1"/><path d="M0 -14H6V0M9 -10Q16 -2 13 5" class="i"/></g>
<g transform="translate(1072,800)"><path d="M-11 -5Q-6 -13 3 -13Q11 -10 12 -2Q12 8 5 12H-6Q-12 8 -11 -5Z" fill="#cdb6e6"/><path d="M-11 0H11M0 -12V12" stroke="#333" stroke-width="1"/></g>
<g transform="translate(1072,840)"><path class="i" d="M-13 12V-4L-7 -12M-8 12V-4L-2 -12M-3 12V-5H11V12H-3M11 -5L11 -12H-2"/><path d="M-18 -15L-15 -12L-18 -9L-19 -12Z" class="f"/></g>
<g transform="translate(1072,880)"><path class="f" d="M0 -15L4 -10H-4ZM0 15L4 10H-4ZM-15 0L-10 -4V4ZM15 0L10 -4V4Z"/><rect x="-7" y="-7" width="14" height="14" class="i"/><path d="M-7 -7L0 0L7 -7M-7 7L0 0L7 7" class="i"/></g>
<g transform="translate(1072,919)"><path d="M-16 -3L-5 -8L14 8L4 13Z" fill="#cdb6e6"/><path d="M-5 -8L0 -10L16 4L14 8" class="i"/><path d="M11 -15L14 -13M11 -11L14 -13" stroke="#ddd" stroke-width="1.500"/></g>
<g transform="translate(1072,959)"><path class="i" d="M-14 3L-6 -5H-6L-3 -12H13V5L7 12H-6ZM-6 -5H7V12M7 -5L13 -12M-14 3L7 -2"/><circle cx="-14" cy="3" r="2" class="f"/></g>
<g fill="#8c8c8c"><use href="#corner" x="1095" y="491"/><use href="#corner" x="1095" y="537"/><use href="#corner" x="1095" y="657"/><use href="#corner" x="1095" y="697"/><use href="#corner" x="1095" y="777"/><use href="#corner" x="1095" y="817"/><use href="#corner" x="1095" y="857"/><use href="#corner" x="1095" y="897"/><use href="#corner" x="1095" y="937"/><use href="#corner" x="1095" y="977"/></g>
</g>

<!-- gizmo -->
<path d="M1862 168L1861 134" stroke="#2b85f0" stroke-width="3"/>
<path d="M1862 168L1894 161" stroke="#6fa51c" stroke-width="3"/>
<path d="M1862 168L1879 179" stroke="#e5395a" stroke-width="3"/>
<circle cx="1844" cy="156" r="8" fill="#4a3b3e" stroke="#8d4a55" stroke-width="1.500"/>
<circle cx="1830" cy="174" r="9" fill="#4e5a38" stroke="#7fa82e" stroke-width="1.500"/>
<circle cx="1862" cy="202" r="8.500" fill="#3a4d6a" stroke="#3f72b8" stroke-width="1.500"/>
<circle cx="1861" cy="134" r="9.500" fill="#2b85f0"/>
<circle cx="1894" cy="161" r="9" fill="#6fa51c"/>
<circle cx="1879" cy="179" r="10" fill="#f03a5a"/>
<text x="1857" y="138.500" textLength="8" lengthAdjust="spacingAndGlyphs" style="fill:#12305a;font-weight:bold;font-size:11px">Z</text>
<text x="1890" y="165.500" textLength="8" lengthAdjust="spacingAndGlyphs" style="fill:#24400a;font-weight:bold;font-size:11px">Y</text>
<text x="1875" y="183.500" textLength="8" lengthAdjust="spacingAndGlyphs" style="fill:#5a0f20;font-weight:bold;font-size:11px">X</text>

<!-- right nav -->
<circle cx="1893" cy="230" r="15" fill="#2a2a2a"/>
<g transform="translate(1893,230)"><circle cx="2" cy="-2" r="6.500" class="f"/><path d="M-3 3L-8 8" stroke="#ddd" stroke-width="2.500"/><path d="M2 -6V2M-2 -2H6" stroke="#2a2a2a" stroke-width="1.200"/></g>
<circle cx="1893" cy="264" r="15" fill="#2a2a2a"/>
<g transform="translate(1893,264)"><path class="f" d="M-6 3L-10 -2Q-9 -4 -7 -2L-4 0V-7Q-3 -9 -2 -7V-2L-1 -9Q1 -10 1 -8V-2L3 -8Q5 -8 4 -5V-1L7 -5Q9 -4 7 -2L4 8H-3Z"/></g>
<circle cx="1893" cy="298" r="15" fill="#2f2f2f"/>
<g transform="translate(1892,298)"><circle cx="-4" cy="-5" r="3.500" class="f"/><circle cx="3" cy="-6" r="3.500" class="f"/><rect x="-7" y="-1" width="12" height="8" class="f"/><path d="M6 2L11 0V7L6 5Z" class="f"/></g>
<circle cx="1893" cy="333" r="15" fill="#6f6a66"/>
<g transform="translate(1893,333)"><path d="M-6 -7H6L9 7H-9ZM-2 -7L-3 7M2 -7L3 7M-7 -2H7M-8 3H8" fill="none" stroke="#e4e4e4" stroke-width="1.100"/></g>
<path d="M1916 131L1912 136L1916 141" fill="none" stroke="#aaa" stroke-width="1.400"/>

<!-- FM logo -->
<circle cx="1107.500" cy="306" r="113" fill="#363e42"/>
<rect x="994" y="421" width="227" height="43" fill="#363e42"/>
<text x="1023" y="333" textLength="70" lengthAdjust="spacingAndGlyphs" style="font-size:126px;font-style:oblique;fill:#fff">F</text>
<text x="1095" y="333" textLength="101" lengthAdjust="spacingAndGlyphs" style="font-size:126px;font-style:oblique;fill:#1fa4dc">M</text>
<text x="1023" y="348" textLength="172" style="font-size:13.500px;fill:#1fa4dc">FRANCESCO MILANESE</text>
<text x="1047" y="375" textLength="122" lengthAdjust="spacingAndGlyphs" style="font-size:24px;font-style:oblique;fill:#eeeeee">3D Models</text>
<text x="1013" y="451" textLength="185" lengthAdjust="spacingAndGlyphs" style="font-size:26px;font-weight:bold;font-style:oblique;fill:#c8c800">Stock Models</text>

<!-- status bar -->
<use href="#mouse" x="18" y="1028"/>
<text class="st" x="39" y="1032" textLength="83" lengthAdjust="spacingAndGlyphs">Change Frame</text>
<use href="#mouse" x="143" y="1028"/><path d="M151 1022V1027M154 1021V1025" stroke="#999"/>
<text class="st" x="164" y="1032" textLength="60" lengthAdjust="spacingAndGlyphs">Box Select</text>
<use href="#mouse" x="249" y="1028"/>
<text class="st" x="269" y="1032" textLength="51" lengthAdjust="spacingAndGlyphs">Pan View</text>
<use href="#mouse" x="462" y="1028"/>
<text class="st" x="481" y="1032" textLength="98" lengthAdjust="spacingAndGlyphs">UV Context Menu</text>
<text class="st" x="1033" y="1032" textLength="876" lengthAdjust="spacingAndGlyphs">gold-crown-10 | Verts:26,320/26,320 | Edges:52,640/52,640 | Faces:26,320/26,320 | Tris:52,640 | Objects:1/2 | Memory: 205.5 MiB | VRAM: 1.3/6.0 GiB | 3.1.0</text>
</svg>
</body>
</html>
